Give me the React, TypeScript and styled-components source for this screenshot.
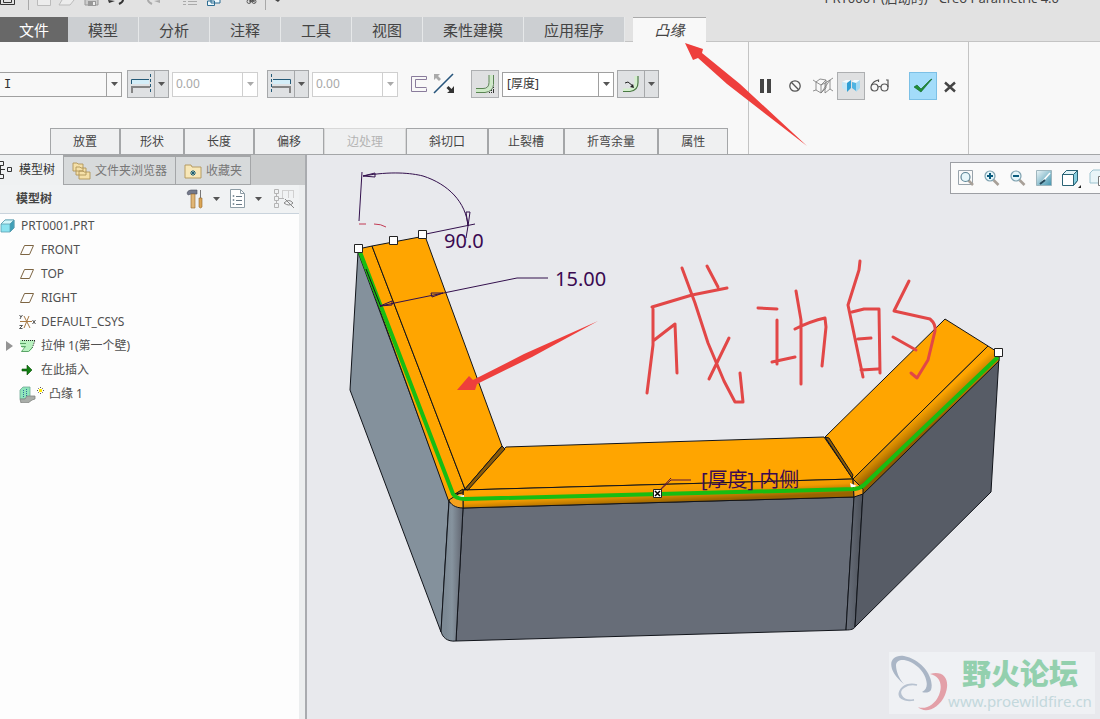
import React from "react";
import styled, { createGlobalStyle, css } from "styled-components";

const GlobalStyle = createGlobalStyle`
  *, *::before, *::after { box-sizing: border-box; }
  body {
    margin: 0;
    background: #e8e9ed;
    color: #444;
    font: 12px/16px "Noto Sans", "Noto Sans CJK SC", sans-serif;
    overflow: hidden;
  }
  button, input, select { font: inherit; color: inherit; margin: 0; padding: 0; }
  svg { display: block; flex: none; }
`;

const line = "#a4a6a8";

const Shell = styled.div`
  position: relative;
  display: flex;
  flex-direction: column;
  height: 100vh;
`;

const TitleBar = styled.header`
  display: flex;
  justify-content: space-between;
  height: 17px;
  background: #e2e2e2;
  overflow: hidden;
`;

const QuickAccess = styled.div`
  display: flex;
  align-items: flex-start;
`;

const QuickButton = styled.button<{ $width: number }>`
  display: flex;
  width: ${(p) => p.$width}px;
  border: 0;
  background: none;
`;

const QuickSeparator = styled.span`
  width: 1px;
  height: 10px;
  background: #a8a8a8;
`;

const Title = styled.div`
  margin: -12px 41px 0 0;
  font-size: 13px;
  line-height: 20px;
`;

const TabBar = styled.nav`
  display: flex;
  height: 25px;
  background: #e2e2e2;
`;

const Tab = styled.button<{ $kind?: "file" | "active" }>`
  min-width: 71px;
  padding: 0 20px;
  border: 0;
  border-right: 1px solid #e6e8e9;
  background: #cccfd2;
  font-size: 15px;
  line-height: 24px;
  ${(p) =>
    p.$kind === "file" &&
    css`
      min-width: 68px;
      padding: 0 12px;
      border: 0;
      background: #686868;
      color: #fff;
    `}
  ${(p) =>
    p.$kind === "active" &&
    css`
      min-width: 73px;
      border: 0;
      border-top: 1px solid #aaa;
      background: #f8f8f8;
      font-style: italic;
    `}
`;

const TabGap = styled.span<{ $grow?: boolean }>`
  flex: ${(p) => (p.$grow ? "1" : "0 0 8px")};
  border-bottom: 1px solid #c4c4c4;
`;

const Ribbon = styled.section`
  display: flex;
  height: 113px;
  background: #f8f8f8;
  border-bottom: 1px solid ${line};
`;

const Dashboard = styled.div`
  display: flex;
  flex-direction: column;
  justify-content: space-between;
  padding: 28px 20px 0 0;
`;

const Controls = styled.div`
  display: flex;
  align-items: center;
  height: 28px;
`;

const Spacer = styled.span<{ $size: number }>`
  flex: none;
  width: ${(p) => p.$size}px;
`;

const ComboFrame = styled.span<{ $width: number; $off?: boolean; $flush?: boolean }>`
  display: flex;
  width: ${(p) => p.$width}px;
  height: 25px;
  position: relative;
  border: 1px solid ${(p) => (p.$off ? "#cfcfcf" : "#a0a0a0")};
  ${(p) => p.$flush && "border-left: 0;"}
  background: ${(p) => (p.$flush ? "#f8f8f8" : "#fff")};
  color: ${(p) => (p.$off ? "#a8a8a8" : "#333")};
`;

const fieldStyle = css`
  flex: 1;
  min-width: 0;
  width: 100%;
  border: 0;
  padding: 0 4px;
  background: none;
  outline: 0;
  color: inherit;
  appearance: none;
  opacity: 1;
`;

const ComboInput = styled.input`
  ${fieldStyle}
  padding: 0 3px;
`;

const ComboSelect = styled.select<{ $mono?: boolean }>`
  ${fieldStyle}
  ${(p) => p.$mono && `font-family: "DejaVu Sans Mono", monospace;`}
`;

const ComboArrow = styled.span<{ $off?: boolean }>`
  position: absolute;
  right: 0;
  top: 0;
  bottom: 0;
  width: 15px;
  display: flex;
  align-items: center;
  justify-content: center;
  border-left: 1px solid ${(p) => (p.$off ? "#cfcfcf" : "#a0a0a0")};
  pointer-events: none;
`;

const ToolButton = styled.button<{ $tone?: "pressed" | "ok" }>`
  display: flex;
  align-items: center;
  justify-content: center;
  width: 28px;
  height: 28px;
  border: 1px solid transparent;
  background: none;
  ${(p) => p.$tone === "pressed" && "background: #dfe0e1; border-color: #adafb1;"}
  ${(p) => p.$tone === "ok" && "background: #a3dcfa; border-color: #7cc0e6;"}
`;

const BareButton = styled.button`
  display: flex;
  border: 0;
  background: none;
`;

const SplitFrame = styled.span`
  display: flex;
  width: 42px;
  height: 28px;
  border: 1px solid #a6a8aa;
  background: #dfe1e3;
`;

const SplitPart = styled.button<{ $arrow?: boolean }>`
  display: flex;
  align-items: center;
  justify-content: center;
  width: ${(p) => (p.$arrow ? 14 : 26)}px;
  border: 0;
  ${(p) => p.$arrow && "border-left: 1px solid #a6a8aa;"}
  background: none;
`;

const Drawers = styled.div`
  display: flex;
  padding-left: 50px;
`;

const DrawerButton = styled.button<{ $compact?: boolean }>`
  height: 26px;
  padding: 0 ${(p) => (p.$compact ? 19 : 22)}px;
  border: 1px solid ${line};
  border-bottom: 0;
  background: #eff0f1;
  white-space: nowrap;
  &:disabled {
    color: #b4b4b4;
    border-color: #d8d8d8;
  }
`;

const ActionGroup = styled.div`
  display: flex;
  align-items: center;
  width: 221px;
  height: 112px;
  padding: 0 10px 24px;
  border: 1px solid #c4c4c4;
  border-width: 0 1px;
`;

const Workspace = styled.main`
  flex: 1;
  display: flex;
  min-height: 0;
`;

const Navigator = styled.aside`
  display: flex;
  flex-direction: column;
  flex: 0 0 307px;
  border-right: 2px solid #a9abaf;
  background: #eceeef;
`;

const NavTabs = styled.div`
  display: flex;
  height: 30px;
  background: #c9cbcc;
`;

const NavTab = styled.button<{ $active?: boolean }>`
  display: flex;
  align-items: center;
  gap: 4px;
  padding: 0 8px;
  border: 1px solid ${line};
  border-width: 2px 1px 1px 0;
  background: #d7dadb;
  color: #777;
  white-space: nowrap;
  ${(p) =>
    p.$active &&
    css`
      padding: 0 8px 0 0;
      gap: 7px;
      border-width: 0 1px 0 0;
      background: #eff1f2;
      color: #333;
    `}
`;

const NavHeader = styled.div`
  display: flex;
  align-items: center;
  height: 29px;
  margin-right: 6px;
  padding: 0 4px 0 16px;
  border-bottom: 1px solid #c9d3dc;
  background: #f0f2f3;
`;

const NavTitle = styled.h2`
  flex: 1;
  margin: 0;
  font-size: 12px;
  line-height: 16px;
  font-weight: 700;
`;

const Tree = styled.ul`
  flex: 1;
  margin: 0 6px 0 0;
  padding: 0;
  list-style: none;
  background: #fdfdfd;
`;

const TreeRow = styled.li<{ $root?: boolean }>`
  display: flex;
  align-items: center;
  gap: 5px;
  height: 24px;
  padding-left: ${(p) => (p.$root ? 0 : 5)}px;
  color: #505050;
`;

const Twisty = styled.span`
  width: 9px;
`;

const Viewport = styled.section`
  position: relative;
  flex: 1;
  min-width: 0;
  overflow: hidden;
  background: #e8e9ed;
`;

const ViewTools = styled.div`
  position: absolute;
  top: 7px;
  right: 0;
  display: flex;
  align-items: center;
  gap: 8px;
  width: 150px;
  height: 32px;
  padding-left: 6px;
  border: 1px solid #9d9fa4;
  border-right: 0;
  background: #fafafa;
  overflow: hidden;
`;

const Watermark = styled.div`
  position: absolute;
  right: 5px;
  bottom: 5px;
  display: flex;
  width: 206px;
  height: 62px;
  background: #eff1f4;
`;

const WatermarkText = styled.div`
  display: flex;
  flex-direction: column;
  align-items: center;
  width: 142px;
`;

const WatermarkName = styled.span`
  font: 900 29px/40px "Noto Sans CJK SC", sans-serif;
  color: #93d0ae;
`;

const WatermarkUrl = styled.span`
  font: 15px/18px "Noto Sans", sans-serif;
  color: #c3d8dc;
`;

const Annotations = styled.svg`
  position: absolute;
  top: 0;
  left: 0;
  pointer-events: none;
`;

const Caret = ({ color = "#555" }: { color?: string }) => (
  <svg width="7" height="4" viewBox="0 0 7 4"><path d="M0 0h7L3.500 4z" fill={color} /></svg>
);

const OffsetIcon = ({ flip }: { flip?: boolean }) => (
  <svg width="22" height="20" viewBox="0 0 22 20" fill="none">
    <g transform={flip ? "translate(22 0) scale(-1 1)" : undefined}>
      <path d="M2 6h17v4H2z" fill="#d4eef8" />
      <path d="M1.500 10V5.500H19" stroke="#245a78" />
      <path d="M2 19v-6h18" stroke="#858585" strokeWidth="2" />
      <path d="M20.500 0v20" stroke="#245a78" strokeDasharray="3 2" />
    </g>
  </svg>
);

function Combo({ label, value, width }: { label: string; value: string; width: number }) {
  return (
    <ComboFrame $width={width} $off>
      <ComboInput aria-label={label} defaultValue={value} disabled />
      <ComboArrow $off><Caret color="#aaa" /></ComboArrow>
    </ComboFrame>
  );
}

function Choice({ label, value, width, flush }: { label: string; value: string; width: number; flush?: boolean }) {
  return (
    <ComboFrame $width={width} $flush={flush}>
      <ComboSelect aria-label={label} $mono={flush}><option>{value}</option></ComboSelect>
      <ComboArrow><Caret /></ComboArrow>
    </ComboFrame>
  );
}

function Split({ label, children }: { label: string; children: React.ReactNode }) {
  return (
    <SplitFrame>
      <SplitPart aria-label={label}>{children}</SplitPart>
      <SplitPart $arrow aria-label={`${label} ▾`}><Caret /></SplitPart>
    </SplitFrame>
  );
}

const tabs = ["模型", "分析", "注释", "工具", "视图", "柔性建模", "应用程序"];
const drawers: { name: string; compact?: boolean; off?: boolean }[] = [
  { name: "放置" },
  { name: "形状", compact: true },
  { name: "长度" },
  { name: "偏移" },
  { name: "边处理", off: true },
  { name: "斜切口" },
  { name: "止裂槽", compact: true },
  { name: "折弯余量" },
  { name: "属性" },
];

const CubeIcon = () => (
  <svg width="16" height="16" viewBox="0 0 16 16" stroke="#5b9fb0" strokeWidth=".8" strokeLinejoin="round">
    <path d="M1 6l4-4h9v8l-4 4H1z" fill="#8be3f0" />
    <path d="M1 6l4-4h9l-4 4z" fill="#d4f7fb" />
    <path d="M10 6l4-4v8l-4 4z" fill="#3fa0b8" />
  </svg>
);

const PlaneIcon = () => (
  <svg width="17" height="16" viewBox="0 0 17 16"><path d="M5.500 3.500h9l-4 9h-9z" fill="none" stroke="#7d6543" /></svg>
);

const CsysIcon = () => (
  <svg width="17" height="16" viewBox="0 0 17 16" fill="none">
    <path d="M1 7.500h12M5 14l5-12M5 2l6 12" stroke="#a87a45" />
    <path d="M.5 1l1.500 2 1.500-2M2 3L1 5M.5 11.500h3l-3 3h3M13.500 6l3 4M16.500 6l-3 4" stroke="#444" strokeWidth=".9" />
  </svg>
);

const WallIcon = () => (
  <svg width="17" height="16" viewBox="0 0 17 16">
    <path d="M1 2h15l-3 9-3 3H2l4-4H3L1 6z" fill="#b9f2c0" />
    <path d="M3 2.500h13l-3 8" fill="none" stroke="#222" strokeDasharray="1 1" />
    <path d="M1 5.500h6M2 8.500h4.500l-4 5h7l4-4" fill="none" stroke="#5ba468" />
  </svg>
);

const InsertIcon = () => (
  <svg width="17" height="16" viewBox="0 0 17 16"><path d="M3 7h5V3l5 5-5 5V9H3z" fill="#138013" stroke="#064f06" strokeWidth=".6" /></svg>
);

const FlangeIcon = () => (
  <svg width="25" height="17" viewBox="0 0 25 17">
    <path d="M1 4l3-3h7v9l-2 3H1z" fill="#8fe6bb" stroke="#6fa895" strokeWidth=".8" />
    <path d="M1 13h5l2-3h8v3l-3 1-4 3H2z" fill="#a9ada9" stroke="#808480" strokeWidth=".8" />
    <path d="M4.500 4v7M7.500 3v8" stroke="#346b9d" strokeDasharray="1 1" />
    <path d="M21.500 1v7M18 4.500h7M19 2l5 5M24 2l-5 5" stroke="#555" strokeDasharray="1 1" />
    <path d="M20 3h3v3h-3z" fill="#ffe700" />
  </svg>
);

const tree: { name: string; icon: React.ReactNode; twisty?: boolean }[] = [
  { name: "FRONT", icon: <PlaneIcon /> },
  { name: "TOP", icon: <PlaneIcon /> },
  { name: "RIGHT", icon: <PlaneIcon /> },
  { name: "DEFAULT_CSYS", icon: <CsysIcon /> },
  { name: "拉伸 1(第一个壁)", icon: <WallIcon />, twisty: true },
  { name: "在此插入", icon: <InsertIcon /> },
  { name: "凸缘 1", icon: <FlangeIcon /> },
];

const Magnifier = ({ sign }: { sign?: string }) => (
  <svg width="18" height="18" viewBox="0 0 18 18" fill="none">
    <path d="M10.500 11l5 5" stroke="#a8a098" strokeWidth="2.600" />
    <circle cx="7" cy="7" r="5" fill="#e6f6fa" stroke="#7fa2b0" strokeWidth="1.200" />
    <path d={sign} stroke="#0b5c7e" strokeWidth="2" />
  </svg>
);

function Scene() {
  return (
    <svg width="793" height="564" viewBox="307 155 793 564" fill="none" strokeLinejoin="round">
      <defs>
        <linearGradient id="bendLeft" x1="446" x2="461" y1="0" y2="0" gradientUnits="userSpaceOnUse">
          <stop offset="0" stopColor="#7d8a95" /><stop offset=".4" stopColor="#86939e" /><stop offset="1" stopColor="#676d78" />
        </linearGradient>
        <linearGradient id="bendRight" x1="848" x2="861" y1="0" y2="0" gradientUnits="userSpaceOnUse">
          <stop offset="0" stopColor="#676d78" /><stop offset="1" stopColor="#4f545d" />
        </linearGradient>
        <linearGradient id="foldFront" x1="650" y1="484" x2="651" y2="503" gradientUnits="userSpaceOnUse">
          <stop offset="0" stopColor="#ffa500" /><stop offset=".5" stopColor="#f09a00" /><stop offset="1" stopColor="#9a6400" />
        </linearGradient>
        <linearGradient id="foldRight" x1="919" y1="413" x2="931" y2="427" gradientUnits="userSpaceOnUse">
          <stop offset="0" stopColor="#ffa500" /><stop offset=".5" stopColor="#cc8400" /><stop offset="1" stopColor="#8e5c00" />
        </linearGradient>
      </defs>
      <g stroke="#11141a">
        <path d="M358 252l-8 138 91 242 8-132z" fill="#84919c" />
        <path d="M463 508l391-11-8 133-390 11z" fill="#676d78" />
        <path d="M449 502l14 6-7 133c-9 1-14-4-15-10z" fill="url(#bendLeft)" />
        <path d="M854 497l9-5-8 135c-1 2-4 3-9 3z" fill="url(#bendRight)" />
        <path d="M863 492l136-135-8 135-136 135z" fill="#575c66" />
        <path d="M358 249l14-3 93 243-12 11-4 2z" fill="#ffa500" />
        <path d="M372 246l53-10 77 210-37 43z" fill="#ffa500" />
        <path d="M465 490l41-43 318-10 29 42z" fill="#ffa500" />
        <path d="M463 490l390-11 1 18-391 11z" fill="url(#foldFront)" />
        <path d="M825 437l120-118 43 27-135 133z" fill="#ffa500" />
        <path d="M853 479l135-133 11 7v8L863 494z" fill="url(#foldRight)" />
        <path d="M449 500l14-9v17c-8 0-13-4-14-8z" fill="#f5a11c" />
        <path d="M853 479l10 10v5l-9 3z" fill="#f5a11c" />
        <path d="M502 446l-37 43 3 1 37-41z" fill="#8a5a08" />
        <path d="M825 437l27 41 1-3-24-37z" fill="#8a5a08" />
        <path d="M455 494l8-5v4z" fill="#8a5a08" />
      </g>
      <path d="M457 496l7-1v4zM850 483l7 3-6 2z" fill="#fff" />
      <path d="M360 252l93 242q3 5 12 5l390-10q6-1 9-4l134-128" stroke="#18bd12" strokeWidth="4" strokeLinejoin="round" />
      <path d="M366 269l15 38" stroke="#11141a" />
      <g stroke="#33104d">
        <path d="M362 172l-3 49M363 176c28-5 48-3 60 0 25 8 43 26 45 50l-2 12M426 234l49-10" />
        <path d="M363 176l12-3v4zM468 226l-2-14h4zM380 306l12-5v4zM443 293l-12 0 1 4z" />
        <path d="M380 306l137-28h31" />
      </g>
      <path d="M359 224h7M374 224q7 0 12 3" stroke="#c23b54" />
      <path d="M657 493l14-13h20M659 491l12-13" stroke="#5a123c" />
      <g fill="#fff" stroke="#222">
        <path d="M354.500 244.500h8v8h-8zM389.500 236.500h8v8h-8zM418.500 230.500h8v8h-8zM994.500 348.500h8v8h-8zM653.500 489.500h8v8h-8z" />
        <path d="M655 491l5 5M660 491l-5 5" stroke="#000" strokeWidth="1.500" />
      </g>
      <g fill="#3a0a52" fontFamily="'Noto Sans', 'Noto Sans CJK SC', sans-serif" fontSize="20">
        <text x="444" y="248">90.0</text>
        <text x="555" y="286">15.00</text>
        <text x="701" y="487">[厚度] 内侧</text>
      </g>
    </svg>
  );
}

export default function App() {
  return (
    <Shell>
      <GlobalStyle />
      <TitleBar>
        <QuickAccess>
          <QuickButton $width={28} aria-label="窗口">
            <svg width="18" height="6" viewBox="0 0 18 6" fill="none"><path d="M.5 0v4.500h14V0" stroke="#333" /><path d="M3.500 0v2.500h8V0" stroke="#333" /></svg>
          </QuickButton>
          <QuickSeparator />
          <QuickButton $width={29} aria-label="新建">
            <svg width="22" height="6" viewBox="0 0 22 6"><path d="M8.500 0v5.500h13V0" fill="#ececec" stroke="#bbb" /></svg>
          </QuickButton>
          <QuickButton $width={26} aria-label="打开">
            <svg width="20" height="6" viewBox="0 0 20 6"><path d="M4 0L1 5h11l4-5" fill="#ececec" stroke="#bbb" /></svg>
          </QuickButton>
          <QuickButton $width={24} aria-label="保存">
            <svg width="16" height="6" viewBox="0 0 16 6"><path d="M1 0v5h13V0" fill="#ccc" stroke="#999" /><path d="M4 1h8v5H4z" fill="#999" /><path d="M9 2h2v3H9z" fill="#eee" /></svg>
          </QuickButton>
          <QuickButton $width={38} aria-label="撤消">
            <svg width="18" height="6" viewBox="0 0 18 6" fill="none"><path d="M0 0l7 1-6 2z" fill="#333" /><path d="M15 0q0 2-4 4" stroke="#333" strokeWidth="2" /></svg>
          </QuickButton>
          <QuickButton $width={36} aria-label="重做">
            <svg width="18" height="6" viewBox="0 0 18 6" fill="none"><path d="M14 0L8 1l6 2z" fill="#aaa" /><path d="M2 0q0 2 4 4" stroke="#aaa" strokeWidth="2" /></svg>
          </QuickButton>
          <QuickButton $width={25} aria-label="再生">
            <svg width="18" height="6" viewBox="0 0 18 6"><path d="M1 1.500h3M6 1.500h9M1 4.500h3M6 4.500h9" stroke="#aaa" /></svg>
          </QuickButton>
          <QuickButton $width={38} aria-label="窗口切换">
            <svg width="15" height="6" viewBox="0 0 15 6" fill="#eef8fc" stroke="#2d6d92"><path d="M4 0v3h9V0M.5 1v4.500h7V1z" /></svg>
          </QuickButton>
          <QuickButton $width={20} aria-label="关闭">
            <svg width="15" height="6" viewBox="0 0 15 6" fill="none" stroke="#444" strokeWidth=".8"><path d="M4 0l6 2M10 0L4 2" /><circle cx="4" cy="1.500" r="2" /><circle cx="9" cy="1.500" r="2" /></svg>
          </QuickButton>
          <QuickSeparator />
          <QuickButton $width={20} aria-label="自定义">
            <svg width="14" height="6" viewBox="0 0 14 6"><path d="M9 0h5l-2 2z" fill="#444" /></svg>
          </QuickButton>
        </QuickAccess>
        <Title>PRT0001 (启动的) - Creo Parametric 4.0</Title>
      </TitleBar>

      <TabBar>
        <Tab $kind="file">文件</Tab>
        {tabs.map((t) => <Tab key={t}>{t}</Tab>)}
        <TabGap />
        <Tab $kind="active">凸缘</Tab>
        <TabGap $grow />
      </TabBar>

      <Ribbon>
        <Dashboard>
          <Controls>
            <Choice label="形状" value="I" width={122} flush />
            <Spacer $size={5} />
            <Split label="第一端"><OffsetIcon /></Split>
            <Spacer $size={3} />
            <Combo label="第一端值" value="0.00" width={86} />
            <Spacer $size={9} />
            <Split label="第二端"><OffsetIcon flip /></Split>
            <Spacer $size={3} />
            <Combo label="第二端值" value="0.00" width={86} />
            <Spacer $size={12} />
            <BareButton aria-label="偏移侧">
              <svg width="18" height="18" viewBox="0 0 18 18" fill="none"><path d="M16.500 4.500v-3h-15v15h15v-3M16.500 4.500h-11v8h11" stroke="#8a7c9c" /></svg>
            </BareButton>
            <Spacer $size={5} />
            <BareButton aria-label="反向">
              <svg width="22" height="22" viewBox="0 0 22 22" fill="none">
                <path d="M1 20L20 1" stroke="#27557c" strokeWidth="1.600" />
                <path d="M1 1h6L5 3l3 3-2 2-3-3-2 2z" fill="#aaa" />
                <path d="M21 20h-7l2.500-2-3-3 2-2 3 3L21 13z" fill="#333" />
              </svg>
            </BareButton>
            <Spacer $size={16} />
            <ToolButton $tone="pressed" aria-label="厚度侧">
              <svg width="20" height="20" viewBox="0 0 20 20" fill="none">
                <path d="M1 16.500h9q6-1 6-7V1" stroke="#cdeac6" strokeWidth="3" />
                <path d="M1 18.500h9q8-1 8.500-8V1M1 14.500h7q6 0 6-6V1" stroke="#5a8553" />
                <path d="M14 18.500h5M16 16.500h3M18.500 13v6" stroke="#333" strokeDasharray="1 1" />
              </svg>
            </ToolButton>
            <Spacer $size={3} />
            <Choice label="厚度" value="[厚度]" width={112} />
            <Spacer $size={3} />
            <Split label="折弯半径">
              <svg width="18" height="18" viewBox="0 0 18 18" fill="none">
                <path d="M1 15h6q7-1 7-8V1" stroke="#d3efcc" strokeWidth="3" />
                <path d="M1 16.500h7q8-1 8-9V1" stroke="#4b7a44" strokeWidth="1.200" />
                <path d="M3 8l3-1 5 4" stroke="#222" /><path d="M12 13l-4-1 3-3z" fill="#222" />
              </svg>
            </Split>
          </Controls>
          <Drawers>
            {drawers.map((d) => (
              <DrawerButton key={d.name} $compact={d.compact} disabled={d.off}>{d.name}</DrawerButton>
            ))}
          </Drawers>
        </Dashboard>

        <ActionGroup>
          <BareButton aria-label="暂停">
            <svg width="14" height="16" viewBox="0 0 14 16" fill="#444"><path d="M1 1h4v14H1zM8 1h4v14H8z" /></svg>
          </BareButton>
          <Spacer $size={15} />
          <BareButton aria-label="无预览">
            <svg width="14" height="14" viewBox="0 0 14 14" fill="none" stroke="#555" strokeWidth="1.300"><circle cx="7" cy="7" r="5.200" /><path d="M3.300 3.300l7.400 7.400" /></svg>
          </BareButton>
          <Spacer $size={11} />
          <BareButton aria-label="分离预览">
            <svg width="20" height="18" viewBox="0 0 20 18" fill="none" stroke="#777" strokeWidth=".8"><path d="M3 5l5 3v8l-5-3zM8 8l5-5v8l-5 5M3 5l4-3 6 1M12 6l5-3v9l-5 4zM0 3l3 2M0 14l3-1M17 3l3-2M17 12l3 2M8 16l9-13M12 6l-4 2" /></svg>
          </BareButton>
          <Spacer $size={4} />
          <ToolButton $tone="pressed" aria-label="连接预览">
            <svg width="20" height="16" viewBox="0 0 20 16">
              <path d="M1 4l4-2h5L6 5z" fill="#f2fbff" /><path d="M1 4l5 1v8l-5-3z" fill="#c5e7f6" /><path d="M6 5l4-3v8l-4 4z" fill="#2f9fd4" />
              <path d="M11 4l2-2h6l-4 3z" fill="#f2fbff" /><path d="M11 4l4 1v8l-4-3z" fill="#4fb4e2" /><path d="M15 5l4-3v8l-4 4z" fill="#a5daf2" />
            </svg>
          </ToolButton>
          <Spacer $size={5} />
          <BareButton aria-label="校验">
            <svg width="22" height="16" viewBox="0 0 22 16" fill="none" stroke="#555" strokeWidth="1.200"><circle cx="4.500" cy="9.500" r="3.500" /><circle cx="14.500" cy="9.500" r="3.500" /><path d="M8 9q1.500-1 3 0M1.500 7q2-4 7-5v2M18 9V2h-2" /></svg>
          </BareButton>
          <Spacer $size={17} />
          <ToolButton $tone="ok" aria-label="确定">
            <svg width="20" height="16" viewBox="0 0 20 16"><path d="M1 9l3-2 4 4 9-9 2-1L8 14z" fill="#1f8e35" stroke="#0d6220" strokeWidth=".6" /></svg>
          </ToolButton>
          <Spacer $size={7} />
          <BareButton aria-label="取消">
            <svg width="12" height="14" viewBox="0 0 12 14"><path d="M1 3.500l10 9M11 3.500l-10 9" stroke="#444" strokeWidth="2.400" /></svg>
          </BareButton>
        </ActionGroup>
      </Ribbon>

      <Workspace>
        <Navigator>
          <NavTabs>
            <NavTab $active>
              <svg width="12" height="20" viewBox="0 0 12 20" fill="none" stroke="#333"><path d="M0 1.500h3.500v4H0M0 14.500h3.500v4H0M0 9.500h5M7.500 7.500h4v4h-4zM.5 5.500v9" /></svg>
              模型树
            </NavTab>
            <NavTab>
              <svg width="19" height="20" viewBox="0 0 19 20" fill="#f5e0a8" stroke="#b09458" strokeWidth=".9"><path d="M1 2h4l1 1h5v7H1zM4 6h4l1 1h5v7H4zM7 10h4l1 1h6v7H7z" /></svg>
              文件夹浏览器
            </NavTab>
            <NavTab>
              <svg width="18" height="18" viewBox="0 0 18 18"><path d="M1 3h6l1 2h9v11H1z" fill="#f7e7b8" stroke="#b09458" strokeWidth=".9" /><path d="M9 8v6M6 11h6M7 9l4 4M11 9l-4 4" stroke="#175e78" /></svg>
              收藏夹
            </NavTab>
          </NavTabs>
          <NavHeader>
            <NavTitle>模型树</NavTitle>
            <BareButton aria-label="设置">
              <svg width="18" height="20" viewBox="0 0 18 20"><path d="M1 4q1-3 4-3h6v4H5L2 6z" fill="#74798a" stroke="#4d5262" strokeWidth=".6" /><path d="M5 5h4v14H5z" fill="#e0b676" stroke="#93672c" strokeWidth=".6" /><path d="M14 1h1v9h-1z" fill="#777" /><path d="M13 9h3v9q-1.500 2-3 0z" fill="#dba655" stroke="#93672c" strokeWidth=".6" /></svg>
            </BareButton>
            <Spacer $size={9} />
            <Caret />
            <Spacer $size={9} />
            <BareButton aria-label="显示">
              <svg width="17" height="20" viewBox="0 0 17 20" fill="none"><path d="M1.500.5h10l4 4v14h-14z" fill="#fff" stroke="#8d9ca5" /><path d="M11.500.5v4h4" stroke="#8d9ca5" /><path d="M7 7.500h6M7 11.500h6M7 15.500h6" stroke="#687985" /><path d="M4 6.500h1v1H4zM4 10.500h1v1H4zM4 14.500h1v1H4z" stroke="#8797a0" /></svg>
            </BareButton>
            <Spacer $size={9} />
            <Caret />
            <Spacer $size={12} />
            <BareButton aria-label="树过滤">
              <svg width="21" height="20" viewBox="0 0 21 20" fill="none" stroke="#b4b4b4"><path d="M.5.500h4v4h-4zM.5 7.500h4v4h-4zM.5 14.500h4v4h-4zM2.500 4.500v3M2.500 11.500v3M5 9.500h5" /><path d="M8.500 1.500h11M8.500 1v8M14.500 1v8M19.500 1v8" stroke="#d0d0d0" /><path d="M10 14q5-5 9 0-4 4-9 0zM11 10l9 9" stroke="#888" /></svg>
            </BareButton>
          </NavHeader>
          <Tree>
            <TreeRow $root><CubeIcon />PRT0001.PRT</TreeRow>
            {tree.map((n) => (
              <TreeRow key={n.name}>
                <Twisty>{n.twisty && <svg width="8" height="10" viewBox="0 0 8 10"><path d="M1 0l7 5-7 5z" fill="#949494" /></svg>}</Twisty>
                {n.icon}
                {n.name}
              </TreeRow>
            ))}
          </Tree>
        </Navigator>

        <Viewport>
          <Scene />
          <ViewTools>
            <BareButton aria-label="重新调整">
              <svg width="18" height="18" viewBox="0 0 18 18" fill="none"><path d="M1.500 1.500h14v14h-14z" stroke="#98a3ab" /><path d="M11 11l5 5" stroke="#a8a098" strokeWidth="2.500" /><circle cx="8.500" cy="8" r="4.500" fill="#e6f6fa" stroke="#5c8496" strokeWidth="1.200" /></svg>
            </BareButton>
            <BareButton aria-label="放大"><Magnifier sign="M4 7h6M7 4v6" /></BareButton>
            <BareButton aria-label="缩小"><Magnifier sign="M4 7h6" /></BareButton>
            <BareButton aria-label="重画">
              <svg width="18" height="18" viewBox="0 0 18 18">
                <defs>
                  <linearGradient id="repaint" x1="0" y1="0" x2="1" y2="1"><stop offset="0" stopColor="#eef6f8" /><stop offset="1" stopColor="#3f93ae" /></linearGradient>
                </defs>
                <path d="M1.500 1.500h15v15h-15z" fill="url(#repaint)" stroke="#9fb6be" /><path d="M7 13l8-9" stroke="#fff" strokeWidth="1.500" /><path d="M5 15l5-4" stroke="#24485a" strokeWidth="2" />
              </svg>
            </BareButton>
            <BareButton aria-label="显示样式">
              <svg width="20" height="19" viewBox="0 0 20 19" stroke="#2a6375" strokeLinejoin="round"><path d="M1.500 5.500l4-4h11v10l-4 5h-11z" fill="#fff" /><path d="M1.500 5.500l4-4h11l-4 4z" fill="#e2f5f9" /><path d="M12.500 5.500l4-4v10l-4 5z" fill="#86cfe0" /><path d="M20 16v3h-3z" fill="#222" stroke="none" /></svg>
            </BareButton>
            <BareButton aria-label="视图管理器">
              <svg width="18" height="18" viewBox="0 0 18 18"><path d="M1 4l3-3h12v10l-3 3H1z" fill="#e9f5f8" stroke="#9cc3cf" /><path d="M9.500 7.500h8v9h-8z" fill="#fff" stroke="#777" /><path d="M11 10.500h6M11 13.500h6" stroke="#777" /></svg>
            </BareButton>
          </ViewTools>
          <Watermark>
            <svg width="60" height="62" viewBox="0 0 60 62" fill="none">
              <path d="M15 32C-3 18-1 2 15 4c17 3 31 21 27 34-2 3-6 3-9 2 9-4 4-18-4-25C20 7 8 5 7 13c0 6 3 14 8 19z" fill="#aab6c6" />
              <path d="M41 22c14-4 21 6 15 21-6 14-20 19-27 12 7 3 17-2 21-12 4-10 1-19-9-21z" fill="#e3a0a8" />
              <path d="M28 33c-10-2-19 4-16 10 2 4 7 6 13 5-11 2-17-3-14-9 3-6 10-8 17-6z" fill="#b7c2d0" stroke="#b7c2d0" strokeWidth="1.500" />
            </svg>
            <WatermarkText>
              <WatermarkName>野火论坛</WatermarkName>
              <WatermarkUrl>www.proewildfire.cn</WatermarkUrl>
            </WatermarkText>
          </Watermark>
        </Viewport>
      </Workspace>

      <Annotations width="1100" height="719" viewBox="0 0 1100 719" fill="none">
        <g fill="#ee3f3c">
          <path d="M685 43l18 6-1 4 38 31 67 62-80-62-29-26-5 2z" />
          <path d="M457 390l12-14 4 4 51-26 74-33-66 36-55 27-2 6z" />
        </g>
        <g stroke="#e24747" strokeWidth="3" strokeLinecap="round" strokeLinejoin="round">
          <path d="M652 307l40-12 35-7M653 309v36l-6 48M653 341l22-17 2 49M682 268l13 35 13 40 16 38 11 21h8l-3-29M707 266l11 21M729 338l-20 41" />
          <path d="M758 308l19 1M777 320v44M772 362l23-5M796 291l5 29v64M795 329q16-8 30-11l1 9-4 39" />
          <path d="M860 261l-1 9-11 35 15 72M852 312l12-3h15l1 64M858 339l13-1M861 370l17-1M909 281l-15 30 36 8q6 5 5 12l-7 29-11 18-6-5M893 337l23 13" />
        </g>
      </Annotations>
    </Shell>
  );
}
